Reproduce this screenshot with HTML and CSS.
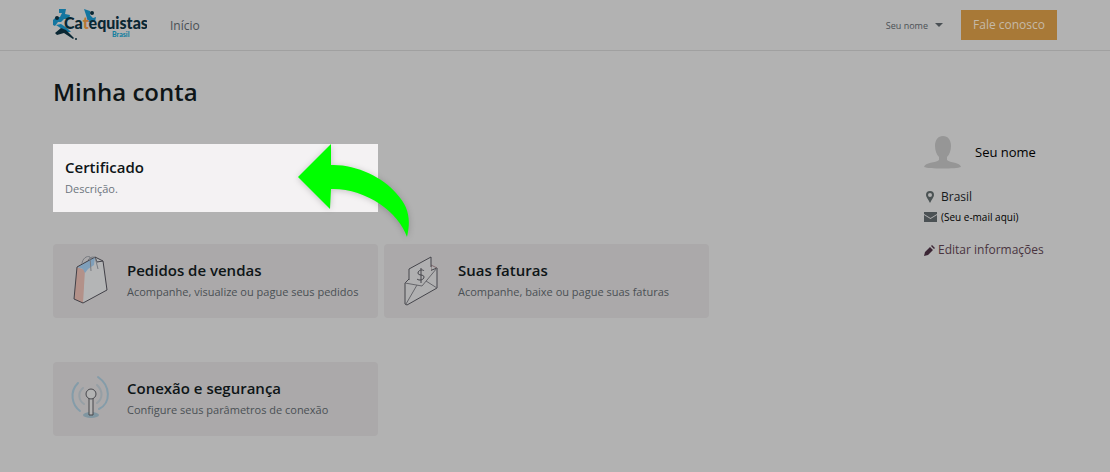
FILE: index.html
```html
<!DOCTYPE html>
<html lang="pt-BR">
<head>
  <meta charset="UTF-8">
  <meta name="viewport" content="width=device-width, initial-scale=1.0">
  <title>Minha conta</title>
  <link rel="stylesheet" href="styles.css">
</head>
<body>
  <header class="navbar">
    <a class="logo" href="#" aria-label="Catequistas Brasil">
      <svg width="94" height="34" viewBox="0 0 94 34">
        <g fill="#1476a0">
          <path d="M6 1h7l-1 5 5 1-1 4-5 0-3 3H5l-3 4-2-1v-5l3-3h4l2-4H6z"/>
          <path d="M31 1l6 2 0 4 3 3 3-1-1 5h-7l-2-7z"/>
          <path d="M3 17l5-1 6 4 4 4-4 0-5-3z"/>
        </g>
        <g fill="#0a2733">
          <circle cx="4" cy="10" r="2"/>
          <circle cx="39" cy="5" r="2"/>
          <path d="M2 25l6-5 5 2 8 8-1 1-9-6-7 2z"/>
          <circle cx="23" cy="31" r="1"/>
        </g>
        <text class="logo-name" x="11" y="21">Ca<tspan class="logo-cross">t</tspan>equistas</text>
        <text class="logo-country" x="59" y="29">Brasil</text>
      </svg>
    </a>
    <nav class="menu">
      <a href="#">Início</a>
    </nav>
    <button class="user-menu" type="button">Seu nome <span class="caret"></span></button>
    <a class="contact" href="#">Fale conosco</a>
  </header>

  <main class="page">
    <h1>Minha conta</h1>
    <div class="columns">
      <div class="cards">
        <section class="row">
          <a class="card highlight" href="#">
            <span class="card-text">
              <strong>Certificado</strong>
              <span>Descrição.</span>
            </span>
            <svg class="arrow" width="112" height="94" viewBox="0 0 112 94">
              <path fill="#0f0" d="M0 33L33 0V21C57 20 85 33 98 49C111 63 113 75 109 93C101 68 67 44 33 45L32 65Z"/>
            </svg>
          </a>
        </section>

        <section class="row">
          <a class="card" href="#">
            <svg class="icon" width="50" height="50" viewBox="0 3 50 50">
              <path fill="#b4b5b6" d="M12 14L29 4l9 4 4 29-24 13-9-4z"/>
              <path fill="#b39189" d="M12 14l8 3-2 33-9-4z"/>
              <path fill="#7f9fba" d="M12 14L30 4l-1 8-6 4-3 4-2-4z"/>
              <g fill="none" stroke="#414047">
                <path d="M12 14L30 4l8 4 4 29-24 13-9-4zM30 4l2 5 6-1"/>
                <path stroke="#777a80" d="M17 11c0-5 5-9 8-7l1 14M23 7c4-5 8-3 8 1l2 8"/>
              </g>
            </svg>
            <span class="card-text">
              <strong>Pedidos de vendas</strong>
              <span>Acompanhe, visualize ou pague seus pedidos</span>
            </span>
          </a>
          <a class="card" href="#">
            <svg class="icon" width="50" height="50" viewBox="0 0 50 50">
              <g fill="#b0b0b1" stroke="#45454b" stroke-linejoin="round">
                <path stroke="#80696e" d="M35 9l6 3-6 8z"/>
                <path d="M9 27l4-4 28-11v20L11 49l-2-1z"/>
                <path stroke="none" d="M13 28V13L35 1v17l-9 12z"/>
                <path fill="none" d="M13 24V13L35 1v10"/>
                <path fill="none" stroke="#66666b" d="M9 27l17 3 15-18M10 48l11-19M30 25l11 7"/>
                <path fill="none" d="M28 15c-1-2-6-1-6 2s6 1 6 4-5 4-7 2M25 12v15"/>
              </g>
            </svg>
            <span class="card-text">
              <strong>Suas faturas</strong>
              <span>Acompanhe, baixe ou pague suas faturas</span>
            </span>
          </a>
        </section>

        <section class="row">
          <a class="card" href="#">
            <svg class="icon" width="50" height="50" viewBox="0 0 50 50">
              <g fill="none" stroke-width="2" stroke-linecap="round">
                <path stroke="#849ca9" d="M13 9C4 18 7 31 15 37M33 3C46 12 46 29 34 35"/>
                <path stroke="#969fa5" d="M18 14C12 19 14 27 19 30M32 11C38 17 38 24 32 29"/>
              </g>
              <ellipse cx="26" cy="41" rx="8" ry="3" fill="#8096a1"/>
              <path fill="#b3b3b3" stroke="#46464b" d="M24 23v18h4V23z"/>
              <circle cx="26" cy="20" r="5" fill="#b3b3b3" stroke="#46464b"/>
            </svg>
            <span class="card-text">
              <strong>Conexão e segurança</strong>
              <span>Configure seus parâmetros de conexão</span>
            </span>
          </a>
        </section>
      </div>

      <aside class="profile">
        <div class="person">
          <svg width="38" height="34" viewBox="0 0 38 34">
            <path fill="#969696" d="M19 1c-5 0-8 4-8 10 0 5 2 9 4 11v3C12 28 1 27 0 32c5 2 32 2 37 0-1-5-11-4-14-7v-3c2-2 4-6 4-11 0-6-3-10-8-10z"/>
          </svg>
          <span>Seu nome</span>
        </div>
        <div class="detail">
          <svg width="13" height="12" viewBox="0 0 13 12">
            <path fill="#4b5354" fill-rule="evenodd" d="M6 0a4 4 0 0 0-4 4c0 2 2 4 4 8 2-4 4-6 4-8a4 4 0 0 0-4-4zm0 2a2 2 0 1 1 0 4 2 2 0 0 1 0-4z"/>
          </svg>
          <span>Brasil</span>
        </div>
        <div class="detail email">
          <svg width="13" height="10" viewBox="0 0 13 10">
            <path fill="#4b5154" d="M0 0h13v2L6.500 6 0 2zM0 3l6.500 4L13 3v7H0z"/>
          </svg>
          <span>(Seu e-mail aqui)</span>
        </div>
        <a class="edit" href="#">
          <svg width="11" height="11" viewBox="0 0 11 11">
            <path fill="#3b2635" d="M0 11l1-4 5-5 3 3-5 5zM7 1l1-1 3 3-1 1z"/>
          </svg>
          <span>Editar informações</span>
        </a>
      </aside>
    </div>
  </main>
</body>
</html>
```
FILE: styles.css
```css
* {
  box-sizing: border-box;
}
body {
  margin: 0;
  min-height: 100vh;
  background: #b2b2b2;
  color: #4a5054;
  font-family: "Open Sans", "Noto Sans", sans-serif;
  font-size: 12px;
}
a {
  color: inherit;
  text-decoration: none;
}
.navbar {
  display: flex;
  align-items: center;
  height: 51px;
  padding: 0 53px;
  border-bottom: 1px solid #a0a0a0;
}
.logo svg {
  display: block;
}
.logo-name {
  font: 900 16px Lato, sans-serif;
  fill: #0a2733;
}
.logo-cross {
  fill: #b97735;
}
.logo-country {
  font: 900 7px Lato, sans-serif;
  fill: #1580a0;
}
.menu {
  flex: 1;
  margin-left: 23px;
}
.user-menu {
  display: flex;
  align-items: center;
  gap: 7px;
  padding: 0;
  border: none;
  background: none;
  color: inherit;
  font: inherit;
  font-size: 9px;
  cursor: pointer;
}
.caret {
  border: 4px solid transparent;
  border-top-color: #4a5054;
  border-bottom: none;
}
.contact {
  margin-left: 18px;
  padding: 0 12px;
  background: #a87937;
  color: #c5b9a8;
  font-size: 12px;
  line-height: 30px;
}
.page {
  padding: 24px 53px;
}
h1 {
  margin: 0;
  color: #0e1517;
  font-size: 24px;
  font-weight: 600;
  line-height: 34px;
}
.columns {
  display: flex;
  justify-content: space-between;
  gap: 32px;
  padding-top: 26px;
}
.cards {
  flex: 0 1 656px;
  display: flex;
  flex-direction: column;
  padding-top: 9px;
}
.row {
  display: grid;
  grid-template-columns: 1fr 1fr;
  gap: 6px;
  margin-bottom: 44px;
}
.row:first-child {
  margin-bottom: 32px;
}
.row:last-child {
  margin-bottom: 0;
}
.card {
  position: relative;
  display: flex;
  gap: 12px;
  padding: 12px;
  border-radius: 4px;
  background: #aba9aa;
}
.card-text {
  display: flex;
  flex-direction: column;
  justify-content: center;
  font-size: 11px;
  line-height: 22px;
}
.card-text strong {
  color: #0e1517;
  font-size: 15px;
  font-weight: 600;
}
.highlight {
  border-radius: 0;
  background: #f4f2f3;
  color: #6c757d;
}
.arrow {
  position: absolute;
  top: 0;
  right: -32px;
  z-index: 1;
  filter: drop-shadow(0 1px 3px #00000033);
}
.profile {
  flex: 0 0 133px;
  color: #17191b;
}
.person {
  display: flex;
  align-items: center;
  gap: 13px;
  color: #000;
  font-size: 13px;
}
.detail {
  display: flex;
  align-items: center;
  gap: 4px;
  line-height: 20px;
}
.person + .detail {
  margin-top: 18px;
}
.email {
  color: #000;
  font-size: 10px;
}
.edit {
  display: flex;
  align-items: center;
  gap: 3px;
  margin-top: 13px;
  color: #49343f;
  line-height: 20px;
  white-space: nowrap;
}
```
